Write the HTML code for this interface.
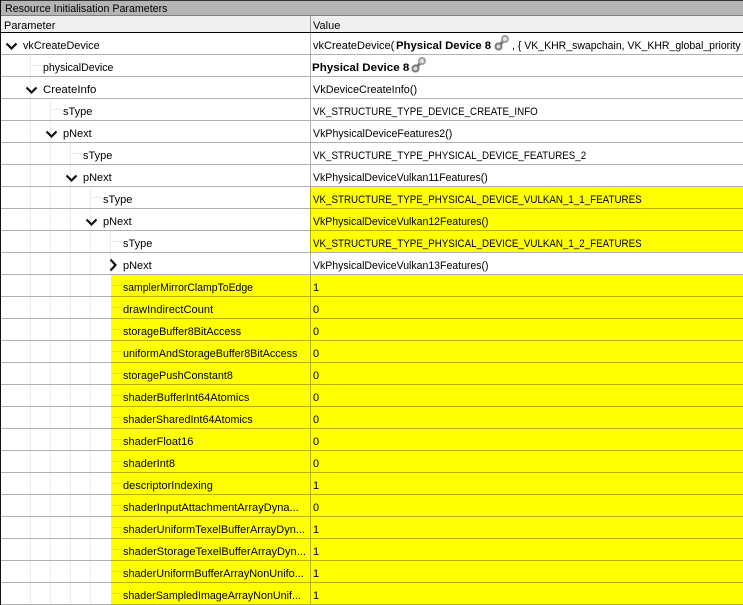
<!DOCTYPE html>
<html><head><meta charset="utf-8"><style>
html,body{margin:0;padding:0;background:#fff}
#p{position:relative;width:743px;height:605px;overflow:hidden;background:#fff;font:11px/14px "Liberation Sans",sans-serif;color:#000}
#p div{position:absolute}
.t{white-space:nowrap;height:14px;margin-top:1px;transform-origin:0 50%}
.s{left:0;width:743px;height:1px;background:#b0b0b0}
.y{background:#ff0;height:21px}
.g{background:#ececec}
.sy{background:#b4b400;height:1px}
.gy{background:#e8e800;height:1px}
.c{transform:scaleX(.889)}
svg{position:absolute}
</style></head><body><div id="p">
<div style="left:0;top:0;width:743px;height:16px;background:#b4b4b4;border-top:1px solid #333;box-sizing:border-box"></div>
<div style="left:0;top:15px;width:743px;height:1px;background:#808080"></div>
<div style="left:0;top:16px;width:743px;height:16px;background:#f0f0f0"></div>
<div style="left:0;top:32px;width:743px;height:1px;background:#000"></div>
<div style="left:310px;top:16px;width:1px;height:16px;background:#999"></div>
<div class="t" style="left:5px;top:1px;transform:scaleX(.97)">Resource Initialisation Parameters</div>
<div class="t" style="left:4px;top:18px">Parameter</div>
<div class="t" style="left:313px;top:18px">Value</div>

<div class="y" style="left:311px;top:187px;width:432px"></div>
<div class="y" style="left:311px;top:209px;width:432px"></div>
<div class="y" style="left:311px;top:231px;width:432px"></div>
<div class="y" style="left:111px;top:275px;width:632px;height:330px"></div>

<div class="g" style="left:30px;top:55px;width:1px;height:550px"></div>
<div class="g" style="left:50px;top:99px;width:1px;height:506px"></div>
<div class="g" style="left:70px;top:143px;width:1px;height:462px"></div>
<div class="g" style="left:90px;top:187px;width:1px;height:418px"></div>
<div class="g" style="left:110px;top:231px;width:1px;height:44px"></div>
<div class="g" style="left:31px;top:65px;width:11px;height:1px"></div>
<div class="g" style="left:51px;top:109px;width:11px;height:1px"></div>
<div class="g" style="left:71px;top:153px;width:11px;height:1px"></div>
<div class="g" style="left:91px;top:197px;width:11px;height:1px"></div>
<div class="g" style="left:111px;top:241px;width:11px;height:1px"></div>
<div class="gy" style="left:111px;top:285px;width:11px"></div>
<div class="gy" style="left:111px;top:307px;width:11px"></div>
<div class="gy" style="left:111px;top:329px;width:11px"></div>
<div class="gy" style="left:111px;top:351px;width:11px"></div>
<div class="gy" style="left:111px;top:373px;width:11px"></div>
<div class="gy" style="left:111px;top:395px;width:11px"></div>
<div class="gy" style="left:111px;top:417px;width:11px"></div>
<div class="gy" style="left:111px;top:439px;width:11px"></div>
<div class="gy" style="left:111px;top:461px;width:11px"></div>
<div class="gy" style="left:111px;top:483px;width:11px"></div>
<div class="gy" style="left:111px;top:505px;width:11px"></div>
<div class="gy" style="left:111px;top:527px;width:11px"></div>
<div class="gy" style="left:111px;top:549px;width:11px"></div>
<div class="gy" style="left:111px;top:571px;width:11px"></div>
<div class="gy" style="left:111px;top:593px;width:11px"></div>

<div class="s" style="top:54px"></div><div class="s" style="top:76px"></div><div class="s" style="top:98px"></div><div class="s" style="top:120px"></div><div class="s" style="top:142px"></div><div class="s" style="top:164px"></div><div class="s" style="top:186px"></div><div class="s" style="top:208px"></div><div class="s" style="top:230px"></div><div class="s" style="top:252px"></div><div class="s" style="top:274px"></div>
<div class="s" style="top:296px"></div><div class="s" style="top:318px"></div><div class="s" style="top:340px"></div><div class="s" style="top:362px"></div><div class="s" style="top:384px"></div><div class="s" style="top:406px"></div><div class="s" style="top:428px"></div><div class="s" style="top:450px"></div><div class="s" style="top:472px"></div><div class="s" style="top:494px"></div><div class="s" style="top:516px"></div><div class="s" style="top:538px"></div><div class="s" style="top:560px"></div><div class="s" style="top:582px"></div><div class="s" style="top:604px"></div>
<div class="sy" style="left:311px;top:208px;width:432px"></div><div class="sy" style="left:311px;top:230px;width:432px"></div>
<div class="sy" style="left:111px;top:296px;width:632px"></div><div class="sy" style="left:111px;top:318px;width:632px"></div><div class="sy" style="left:111px;top:340px;width:632px"></div><div class="sy" style="left:111px;top:362px;width:632px"></div><div class="sy" style="left:111px;top:384px;width:632px"></div><div class="sy" style="left:111px;top:406px;width:632px"></div><div class="sy" style="left:111px;top:428px;width:632px"></div><div class="sy" style="left:111px;top:450px;width:632px"></div><div class="sy" style="left:111px;top:472px;width:632px"></div><div class="sy" style="left:111px;top:494px;width:632px"></div><div class="sy" style="left:111px;top:516px;width:632px"></div><div class="sy" style="left:111px;top:538px;width:632px"></div><div class="sy" style="left:111px;top:560px;width:632px"></div><div class="sy" style="left:111px;top:582px;width:632px"></div><div class="sy" style="left:111px;top:604px;width:632px"></div>

<div style="left:310px;top:33px;width:1px;height:154px;background:#b0b0b0"></div>
<div style="left:310px;top:187px;width:1px;height:66px;background:#b4b400"></div>
<div style="left:310px;top:253px;width:1px;height:22px;background:#b0b0b0"></div>
<div style="left:310px;top:275px;width:1px;height:330px;background:#b4b400"></div>
<div style="left:0;top:0;width:1px;height:605px;background:#111"></div>

<svg style="left:0;top:0" width="130" height="280" fill="none" stroke="#111" stroke-width="2.2">
<path d="M6.5 43.5l5 5 5-5"/><path d="M26.5 87.5l5 5 5-5"/><path d="M46.5 131.5l5 5 5-5"/><path d="M66.5 175.5l5 5 5-5"/><path d="M86.5 219.5l5 5 5-5"/><path d="M110.5 259.5l5 5.5-5 5.5"/>
</svg>

<div class="t" style="left:23px;top:38px;transform:scaleX(.987)">vkCreateDevice</div>
<div class="t" style="left:43px;top:60px;transform:scaleX(.96)">physicalDevice</div>
<div class="t" style="left:43px;top:82px;transform:scaleX(1.04)">CreateInfo</div>
<div class="t" style="left:63px;top:104px">sType</div>
<div class="t" style="left:63px;top:126px">pNext</div>
<div class="t" style="left:83px;top:148px">sType</div>
<div class="t" style="left:83px;top:170px">pNext</div>
<div class="t" style="left:103px;top:192px">sType</div>
<div class="t" style="left:103px;top:214px">pNext</div>
<div class="t" style="left:123px;top:236px">sType</div>
<div class="t" style="left:123px;top:258px">pNext</div>
<div class="t" style="left:123px;top:280px;transform:scaleX(.949)">samplerMirrorClampToEdge</div>
<div class="t" style="left:123px;top:302px;transform:scaleX(1.01)">drawIndirectCount</div>
<div class="t" style="left:123px;top:324px;transform:scaleX(.983)">storageBuffer8BitAccess</div>
<div class="t" style="left:123px;top:346px;transform:scaleX(.978)">uniformAndStorageBuffer8BitAccess</div>
<div class="t" style="left:123px;top:368px;transform:scaleX(.982)">storagePushConstant8</div>
<div class="t" style="left:123px;top:390px">shaderBufferInt64Atomics</div>
<div class="t" style="left:123px;top:412px;transform:scaleX(.977)">shaderSharedInt64Atomics</div>
<div class="t" style="left:123px;top:434px">shaderFloat16</div>
<div class="t" style="left:123px;top:456px">shaderInt8</div>
<div class="t" style="left:123px;top:478px">descriptorIndexing</div>
<div class="t" style="left:123px;top:500px;transform:scaleX(1.005)">shaderInputAttachmentArrayDyna...</div>
<div class="t" style="left:123px;top:522px">shaderUniformTexelBufferArrayDyn...</div>
<div class="t" style="left:123px;top:544px;transform:scaleX(1.005)">shaderStorageTexelBufferArrayDyn...</div>
<div class="t" style="left:123px;top:566px;transform:scaleX(.99)">shaderUniformBufferArrayNonUnifo...</div>
<div class="t" style="left:123px;top:588px;transform:scaleX(.973)">shaderSampledImageArrayNonUnif...</div>

<div class="t" style="left:313px;top:38px">vkCreateDevice(</div>
<div class="t" style="left:396px;top:38px;font-weight:bold;transform:scaleX(1.03)">Physical Device 8</div>
<svg style="left:494px;top:35px" width="17" height="16" fill="none"><path d="M4.5 11.5L11 4" stroke="#777" stroke-width="3"/><circle cx="4.5" cy="11.5" r="3" fill="#ddd" stroke="#7a7a7a" stroke-width="2"/><circle cx="11" cy="4" r="3" fill="#e4e4e4" stroke="#a0a0a0" stroke-width="2"/></svg>
<div class="t" style="left:512px;top:38px;transform:scaleX(.954)">, { VK_KHR_swapchain, VK_KHR_global_priority</div>
<div class="t" style="left:312px;top:60px;font-weight:bold;transform:scaleX(1.054)">Physical Device 8</div>
<svg style="left:411px;top:57px" width="17" height="16" fill="none"><path d="M4.5 11.5L11 4" stroke="#777" stroke-width="3"/><circle cx="4.5" cy="11.5" r="3" fill="#ddd" stroke="#7a7a7a" stroke-width="2"/><circle cx="11" cy="4" r="3" fill="#e4e4e4" stroke="#a0a0a0" stroke-width="2"/></svg>
<div class="t" style="left:313px;top:82px;transform:scaleX(.99)">VkDeviceCreateInfo()</div>
<div class="t c" style="left:313px;top:104px">VK_STRUCTURE_TYPE_DEVICE_CREATE_INFO</div>
<div class="t" style="left:313px;top:126px;transform:scaleX(.965)">VkPhysicalDeviceFeatures2()</div>
<div class="t c" style="left:313px;top:148px">VK_STRUCTURE_TYPE_PHYSICAL_DEVICE_FEATURES_2</div>
<div class="t" style="left:313px;top:170px;transform:scaleX(.956)">VkPhysicalDeviceVulkan11Features()</div>
<div class="t c" style="left:313px;top:192px">VK_STRUCTURE_TYPE_PHYSICAL_DEVICE_VULKAN_1_1_FEATURES</div>
<div class="t" style="left:313px;top:214px;transform:scaleX(.956)">VkPhysicalDeviceVulkan12Features()</div>
<div class="t c" style="left:313px;top:236px">VK_STRUCTURE_TYPE_PHYSICAL_DEVICE_VULKAN_1_2_FEATURES</div>
<div class="t" style="left:313px;top:258px;transform:scaleX(.956)">VkPhysicalDeviceVulkan13Features()</div>
<div class="t" style="left:313px;top:280px">1</div>
<div class="t" style="left:313px;top:302px">0</div>
<div class="t" style="left:313px;top:324px">0</div>
<div class="t" style="left:313px;top:346px">0</div>
<div class="t" style="left:313px;top:368px">0</div>
<div class="t" style="left:313px;top:390px">0</div>
<div class="t" style="left:313px;top:412px">0</div>
<div class="t" style="left:313px;top:434px">0</div>
<div class="t" style="left:313px;top:456px">0</div>
<div class="t" style="left:313px;top:478px">1</div>
<div class="t" style="left:313px;top:500px">0</div>
<div class="t" style="left:313px;top:522px">1</div>
<div class="t" style="left:313px;top:544px">1</div>
<div class="t" style="left:313px;top:566px">1</div>
<div class="t" style="left:313px;top:588px">1</div>
</div></body></html>
